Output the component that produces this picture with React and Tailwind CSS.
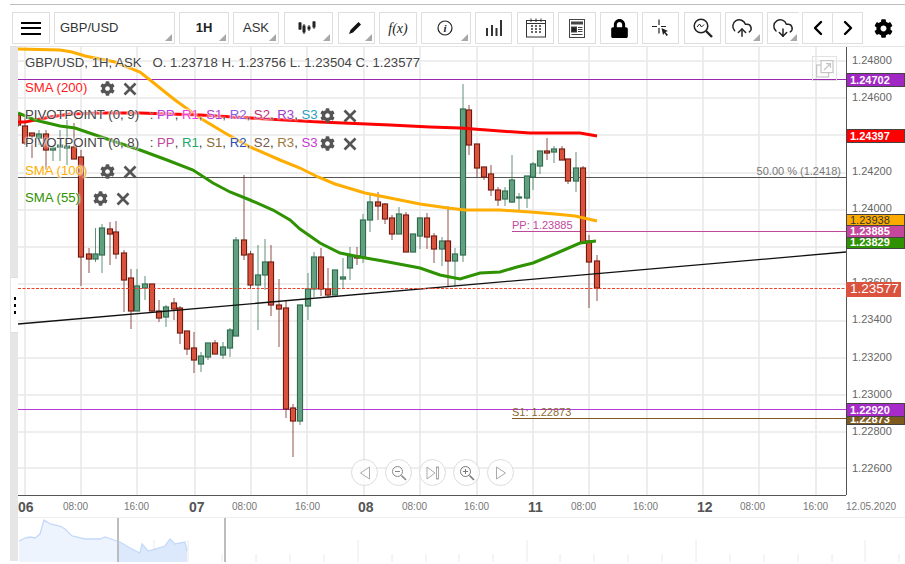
import { ChevronLeft, ChevronRight, CloudUpload, CloudDownload } from 'lucide-react';
import { FaCog, FaLock } from 'react-icons/fa';

// x, wick top, wick bottom, body top, body bottom, direction
const candles = [
  [18, 114, 127, 115, 125, 'r'], [25, 118, 145, 126, 143, 'r'], [32, 133, 158, 133, 136, 'r'], [39, 130, 145, 134, 138, 'g'],
  [46, 130, 170, 134, 150, 'r'], [53, 146, 161, 148, 150, 'g'], [60, 130, 161, 145, 147, 'g'], [67, 120, 165, 146, 148, 'g'],
  [74, 123, 159, 147, 159, 'r'], [81, 150, 286, 157, 257, 'r'], [89, 248, 273, 254, 259, 'r'], [95.5, 228, 262, 254, 259, 'g'],
  [102, 224, 273, 228, 255, 'g'], [110, 222, 265, 229, 234, 'r'], [116, 221, 259, 232, 254, 'r'], [124, 250, 312, 253, 280, 'r'],
  [131, 269, 329, 278, 311, 'r'], [137, 269, 311, 286, 311, 'g'], [145, 276, 300, 284, 288, 'g'], [152, 284, 312, 284, 311, 'r'],
  [159, 300, 322, 311, 318, 'r'], [166, 305, 327, 307, 317, 'g'], [174, 298, 320, 303, 309, 'r'], [180, 306, 344, 308, 333, 'r'],
  [187, 331, 355, 331, 349, 'r'], [194, 332, 373, 348, 360, 'r'], [201, 352, 372, 356, 364, 'g'], [208, 343, 360, 343, 357, 'g'],
  [215, 340, 354, 343, 354, 'r'], [223, 342, 359, 347, 355, 'g'], [230, 328, 357, 330, 348, 'g'], [236, 237, 336, 240, 336, 'g'],
  [244, 175, 260, 240, 255, 'r'], [250.5, 251, 289, 254, 285, 'r'], [258, 245, 330, 275, 285, 'g'], [265, 239, 290, 262, 275, 'g'],
  [271, 245, 316, 262, 305, 'r'], [279, 279, 347, 305, 309, 'r'], [286, 301, 418, 308, 409, 'r'], [293, 404, 457, 408, 421, 'r'],
  [300, 305, 425, 305, 421, 'g'], [308, 273, 320, 289, 306, 'g'], [314, 252, 297, 257, 289, 'g'], [321, 248, 296, 257, 289, 'r'],
  [328, 268, 298, 289, 295, 'r'], [335, 270, 295, 270, 295, 'g'], [343, 258, 288, 277, 279, 'g'], [350, 247, 280, 256, 268, 'g'],
  [357, 247, 265, 256, 258, 'r'], [363, 214, 263, 220, 257, 'g'], [370, 194, 232, 202, 220, 'g'], [378, 192, 220, 202, 206, 'r'],
  [385, 203, 224, 204, 219, 'r'], [392, 215, 240, 218, 234, 'r'], [399, 207, 234, 214, 234, 'g'], [406, 212, 252, 215, 252, 'r'],
  [413, 234, 252, 234, 252, 'g'], [420, 217, 249, 218, 236, 'g'], [427, 213, 249, 218, 237, 'r'], [434, 233, 263, 236, 249, 'r'],
  [442, 237, 266, 241, 249, 'g'], [448, 206, 286, 241, 261, 'r'], [455, 248, 287, 254, 261, 'g'], [463, 84, 262, 109, 255, 'g'],
  [469, 105, 155, 110, 145, 'r'], [477, 144, 177, 144, 168, 'r'], [484, 167, 180, 167, 177, 'r'], [491, 165, 196, 174, 190, 'r'],
  [498, 187, 206, 190, 200, 'r'], [505, 187, 206, 191, 199, 'g'], [512, 155, 203, 180, 202, 'g'], [519, 193, 212, 197, 198, 'g'],
  [527, 176, 208, 176, 198, 'g'], [533, 162, 190, 164, 177, 'g'], [540, 151, 174, 151, 166, 'g'], [547, 138, 160, 151, 153, 'r'],
  [554, 146, 163, 149, 152, 'g'], [562, 146, 160, 149, 160, 'r'], [568, 159, 184, 159, 181, 'r'], [576, 152, 192, 168, 181, 'g'],
  [583, 166, 243, 168, 243, 'r'], [589, 235, 308, 241, 262, 'r'], [597, 255, 301, 261, 288, 'r'],
];

const orange = '18,49 60,50 72,52 85,56 115,62 140,72 150,80 175,100 200,118 225,133 250,147 280,160 300,168 318,177 335,184 365,193 390,198 420,204 448,208 465,210 500,210 530,212 555,214 575,216 597,221';
const red = '18,122 25,122 50,117 70,114 100,113 140,113 200,115 250,118 320,122 390,125 430,127 460,128 500,131 530,133 580,133 597,136';
const green = '18,113 35,120 60,126 75,128 110,140 140,150 167,160 193,170 213,183 230,192 250,200 273,210 290,220 300,229 320,243 340,253 360,257 383,261 420,268 440,275 460,279 480,273 500,272 517,267 533,263 557,253 580,243 596,241';
const miniArea = '19,540 25,537 30,536 35,537 40,533 44,519 50,523 60,525 65,528 72,535 85,538 100,538 105,536 117,540 120,541 130,547 140,552 142,543 148,550 155,548 165,545 170,538 175,543 185,541 187,550';

const gridX = [25, 81, 137, 195, 251, 307, 364, 420, 477, 533, 589, 647, 703, 759, 816];
const gridY = [61, 98, 135, 173, 210, 247, 284, 321, 358, 395, 432, 468];
const miniShort = [53, 87, 121, 222, 256, 290, 324, 392, 426, 459, 493, 560, 594, 628, 662, 730, 764, 798, 832, 899];
const miniTall = [154, 188, 358, 527, 696, 865];

const ticks = [
  ['1.24800', 60], ['1.24600', 97], ['1.24200', 171], ['1.24000', 208], ['1.23800', 245], ['1.23600', 282],
  ['1.23400', 319], ['1.23200', 357], ['1.23000', 394], ['1.22800', 431], ['1.22600', 468],
];

const tags = [
  { text: '1.24702', top: 73, h: 14, cls: 'bg-[#a027c4] text-white font-bold border border-[#444]' },
  { text: '1.24397', top: 129, h: 14, cls: 'bg-[#ff0000] text-white font-bold border border-[#444]' },
  { text: '1.23938', top: 214, h: 12, cls: 'bg-[#fbab00] text-[#333] border border-[#444]' },
  { text: '1.23829', top: 236, h: 13, cls: 'bg-[#2f9200] text-white font-bold border border-[#444]' },
  { text: '1.23885', top: 225, h: 13, cls: 'bg-[#c4479d] text-white font-bold border border-[#444]' },
  { text: '1.22873', top: 413, h: 12, cls: 'bg-[#7d5a1e] text-white font-bold border border-[#444]' },
  { text: '1.22920', top: 403, h: 14, cls: 'bg-[#a62bc9] text-white font-bold border border-[#444]' },
];

const times = [
  ['06', 18, true], ['08:00', 63], ['16:00', 124], ['07', 189, true], ['08:00', 232], ['16:00', 295], ['08', 358, true], ['08:00', 402],
  ['16:00', 464], ['11', 528, true], ['08:00', 571], ['16:00', 633], ['12', 697, true], ['08:00', 740], ['16:00', 803], ['12.05.2020', 846],
];

function Corner() {
  return (
    <svg className="absolute right-[2px] bottom-[2px]" width="7" height="7" viewBox="0 0 7 7">
      <polygon points="7,0 7,7 0,7" fill="#a8a8a8" />
    </svg>
  );
}

function Btn({ className, arrow, children }) {
  return (
    <div className={`relative flex items-center justify-center h-[32px] shrink-0 border border-[#dedede] ${className}`}>
      {children}
      {arrow && <Corner />}
    </div>
  );
}

function Times({ size = 14 }) {
  return (
    <svg width={size} height={size} viewBox="0 0 14 14" stroke="#555" strokeWidth="2.6">
      <line x1="1.5" y1="1.5" x2="12.5" y2="12.5" />
      <line x1="12.5" y1="1.5" x2="1.5" y2="12.5" />
    </svg>
  );
}

function Tools() {
  return (
    <span className="flex items-center gap-[8px]">
      <FaCog className="text-[#555] text-[15px]" />
      <Times />
    </span>
  );
}

function CircleBtn({ children }) {
  return (
    <div className="flex items-center justify-center w-[27px] h-[27px] rounded-full border border-[#dcdcdc] bg-white/70">
      {children}
    </div>
  );
}

function Toolbar() {
  return (
    <div className="flex mt-[7px] ml-[2px] h-[32px] text-[13px] text-[#333]">
      <Btn className="w-[38px]">
        <div className="flex flex-col gap-[3.5px] w-[20px]">
          <span className="h-[2px] bg-black" />
          <span className="h-[2px] bg-black" />
          <span className="h-[2px] bg-black" />
        </div>
      </Btn>
      <Btn className="w-[121px] ml-[4px] justify-start pl-[5px]" arrow>GBP/USD</Btn>
      <Btn className="w-[50px] ml-[4px] font-bold text-[#222]" arrow>1H</Btn>
      <Btn className="w-[46px] ml-[4px]" arrow>ASK</Btn>
      <Btn className="w-[49px] ml-[5px]" arrow>
        <svg className="mr-[4px]" width="18" height="14" viewBox="0 0 18 14" fill="#222" stroke="#222">
          <line x1="2" y1="1" x2="2" y2="9" /><rect x="1" y="2" width="2" height="6" />
          <line x1="6" y1="3" x2="6" y2="13" /><rect x="5" y="5" width="2" height="6" />
          <line x1="11" y1="4" x2="11" y2="10" /><rect x="10" y="6" width="2" height="2" />
          <line x1="16" y1="0" x2="16" y2="8" /><rect x="15" y="1" width="2" height="5" />
        </svg>
      </Btn>
      <Btn className="w-[37px] ml-[5px]" arrow>
        <svg className="mr-[4px]" width="14" height="14" viewBox="0 0 14 14">
          <path d="M10.5 1 L13 3.5 L5 11.5 L1 13 L2.5 9 Z" fill="#111" />
        </svg>
      </Btn>
      <Btn className="w-[38px] ml-[4px] font-['Liberation_Serif',serif] italic text-[14px] text-[#222]">f(x)</Btn>
      <Btn className="w-[50px] ml-[4px]" arrow>
        <svg className="mr-[3px]" width="16" height="16" viewBox="0 0 16 16">
          <circle cx="8" cy="8" r="7" fill="none" stroke="#222" strokeWidth="1.2" />
          <text x="8" y="12" textAnchor="middle" fontFamily="'Liberation Serif', serif" fontStyle="italic" fontWeight="700" fontSize="11" fill="#222">i</text>
        </svg>
      </Btn>
      <Btn className="w-[37px] ml-[4px]">
        <svg width="18" height="18" viewBox="0 0 18 18" fill="#333">
          <rect x="1" y="9" width="2" height="8" /><rect x="6" y="6" width="2" height="11" />
          <rect x="10.5" y="9" width="2" height="8" /><rect x="15" y="1" width="2" height="16" />
        </svg>
      </Btn>
      <Btn className="w-[37px] ml-[5px]">
        <svg width="20" height="20" viewBox="0 0 20 20" fill="none" stroke="#333">
          <rect x="0.5" y="2.5" width="19" height="16.5" />
          <line x1="0.5" y1="5.5" x2="19.5" y2="5.5" />
          <path d="M5 0.5V4M10 0.5V4M15 0.5V4" />
          <path d="M5 8h2M9 8h2M13 8h2M5 11h2M9 11h2M13 11h2M5 14h2M9 14h2M13 14h2" strokeWidth="1.6" />
        </svg>
      </Btn>
      <Btn className="w-[38px] ml-[4px]">
        <svg width="16" height="19" viewBox="0 0 16 19" fill="none" stroke="#444">
          <rect x="0.5" y="0.5" width="15" height="18" />
          <rect x="2.5" y="3" width="11" height="2" fill="#444" />
          <rect x="2.5" y="8" width="5" height="5" fill="#222" />
          <path d="M9 8.5h4.5M9 10.5h4.5M9 12.5h4.5M2.5 15.5h11" />
        </svg>
      </Btn>
      <Btn className="w-[38px] ml-[4px]"><FaLock className="text-black text-[19px]" /></Btn>
      <Btn className="w-[37px] ml-[4px]">
        <svg width="18" height="18" viewBox="0 0 18 18">
          <path d="M7 0.5V6M7 9V14.5M0 7.5H5M9 7.5H14" stroke="#222" strokeWidth="1.2" fill="none" />
          <path d="M9.5 9 L16 12 L13.5 13 L16 16 L14.5 17 L12.5 14 L11 16 Z" fill="#222" />
        </svg>
      </Btn>
      <Btn className="w-[37px] ml-[5px]">
        <svg width="20" height="20" viewBox="0 0 20 20" fill="none" stroke="#222">
          <circle cx="8" cy="8" r="6.8" strokeWidth="1.5" />
          <path d="M4 9 L6.5 6 L8.5 9 L11 6.5" strokeWidth="1" />
          <line x1="13" y1="13" x2="19" y2="19" strokeWidth="2.4" />
        </svg>
      </Btn>
      <Btn className="w-[38px] ml-[4px]" arrow>
        <CloudUpload className="mr-[5px] text-[#222]" size={22} strokeWidth={1.6} />
      </Btn>
      <Btn className="w-[32px] ml-[4px] border-r-0" arrow>
        <CloudDownload className="mr-[2px] text-[#222]" size={22} strokeWidth={1.6} />
      </Btn>
      <div className="flex h-[32px] ml-[3px] w-[61px] border border-[#dedede]">
        <div className="flex flex-1 items-center justify-center border-r border-[#dedede]">
          <ChevronLeft className="text-black" size={24} strokeWidth={2.4} />
        </div>
        <div className="flex flex-1 items-center justify-center">
          <ChevronRight className="text-black" size={24} strokeWidth={2.4} />
        </div>
      </div>
      <div className="flex items-center justify-center w-[40px]">
        <FaCog className="text-black text-[19px]" />
      </div>
    </div>
  );
}

function Plot() {
  return (
    <svg className="absolute inset-0" width="828" height="448" viewBox="18 47 828 448">
      {gridX.map((x) => <line key={x} x1={x} y1="47" x2={x} y2="495" stroke="#e9e9e9" strokeWidth="1.6" />)}
      {gridY.map((y) => <line key={y} x1="18" y1={y} x2="846" y2={y} stroke="#e9e9e9" strokeWidth="1.6" />)}
      <line x1="18" y1="79.5" x2="846" y2="79.5" stroke="#9c27b0" strokeWidth="1.2" />
      <line x1="18" y1="177.5" x2="846" y2="177.5" stroke="#555" />
      <line x1="512" y1="231.5" x2="846" y2="231.5" stroke="#c0489b" strokeWidth="1.2" />
      <line x1="18" y1="409.5" x2="846" y2="409.5" stroke="#b53ad8" strokeWidth="1.2" />
      <line x1="512" y1="418.5" x2="846" y2="418.5" stroke="#7d5a1e" strokeWidth="1.2" />
      {candles.map(([x, wt, wb, bt, bb, dir]) => {
        const up = dir === 'g';
        return (
          <g key={x}>
            <line x1={x} y1={wt} x2={x} y2={wb} stroke={up ? '#2f6b4c' : '#6b1a12'} strokeOpacity="0.75" />
            <rect x={x - 3.5} y={bt - 1} width="7" height={bb - bt + 2} fill={up ? '#2f6b4c' : '#7a1a10'} fillOpacity="0.2" />
            <rect x={x - 2.5} y={bt} width="5" height={Math.max(bb - bt, 1)} fill={up ? '#629f80' : '#d8523c'} stroke={up ? '#2f6b4c' : '#6e1a10'} />
          </g>
        );
      })}
      <polyline points={orange} fill="none" stroke="#ffad00" strokeWidth="3" />
      <polyline points={red} fill="none" stroke="#ff0000" strokeWidth="3" />
      <polyline points={green} fill="none" stroke="#2f9200" strokeWidth="3" />
      <line x1="18" y1="324" x2="846" y2="252" stroke="#111" strokeWidth="1.3" />
      <line x1="18" y1="288.5" x2="846" y2="288.5" stroke="#e8452f" strokeDasharray="3 1.5" />
      <text x="841" y="175" textAnchor="end" fontSize="11" fill="#777">50.00 % (1.2418)</text>
      <text x="512" y="229" fontSize="11" fill="#c0489b">PP: 1.23885</text>
      <text x="512" y="416" fontSize="11" fill="#8a6a2e">S1: 1.22873</text>
    </svg>
  );
}

function Legend() {
  return (
    <div className="absolute left-[7px] top-[7px] flex flex-col text-[13.2px] text-[#444] whitespace-pre leading-[18px] [text-shadow:0_0_2px_#fff,0_0_2px_#fff,0_0_3px_#fff]">
      <div className="h-[25px]">GBP/USD, 1H, ASK   O. 1.23718 H. 1.23756 L. 1.23504 C. 1.23577</div>
      <div className="flex items-start h-[27px] text-[#ff2020]">SMA (200)<span className="ml-[13px] mt-[2px]"><Tools /></span></div>
      <div className="flex items-start h-[28px]">
        PIVOTPOINT (0, 9)
        <span className="ml-[7px]"> : </span>
        <span className="text-[#b93be6]">PP</span>, <span className="text-[#f03be0]">R1</span>, <span className="text-[#b03ad6]">S1</span>, <span className="text-[#8a5ce8]">R2</span>, <span className="text-[#c0307a]">S2</span>, <span className="text-[#a040d0]">R3</span>, <span className="text-[#2a9fc0]">S3</span>
        <span className="ml-[2px] mt-[2px]"><Tools /></span>
      </div>
      <div className="flex items-start h-[28px]">
        PIVOTPOINT (0, 8)
        <span className="ml-[7px]"> : </span>
        <span className="text-[#c0489b]">PP</span>, <span className="text-[#1fa76f]">R1</span>, <span className="text-[#8a6a2e]">S1</span>, <span className="text-[#2b4fb0]">R2</span>, <span className="text-[#7a5a4a]">S2</span>, <span className="text-[#a07a3c]">R3</span>, <span className="text-[#c83ad0]">S3</span>
        <span className="ml-[2px] mt-[2px]"><Tools /></span>
      </div>
      <div className="flex items-start h-[27px] text-[#ffad00]">SMA (100)<span className="ml-[13px] mt-[2px]"><Tools /></span></div>
      <div className="flex items-start h-[27px] text-[#2f9200]">SMA (55)<span className="ml-[13px] mt-[2px]"><Tools /></span></div>
    </div>
  );
}

function ZoomControls() {
  return (
    <div className="absolute left-[333px] top-[412px] flex gap-[7px]">
      <CircleBtn>
        <svg width="12" height="14" viewBox="0 0 12 14" fill="none" stroke="#aaa"><path d="M10.5 1 L1.5 7 L10.5 13 Z" /></svg>
      </CircleBtn>
      <CircleBtn>
        <svg width="16" height="16" viewBox="0 0 16 16" fill="none" stroke="#888"><circle cx="6.5" cy="6.5" r="5" /><path d="M4 6.5h5" /><path d="M10.5 10.5 L15 15" strokeWidth="1.6" /></svg>
      </CircleBtn>
      <CircleBtn>
        <svg width="14" height="14" viewBox="0 0 14 14" fill="none" stroke="#aaa"><path d="M1 1 L9 7 L1 13 Z" /><rect x="10.5" y="1" width="2" height="12" /></svg>
      </CircleBtn>
      <CircleBtn>
        <svg width="16" height="16" viewBox="0 0 16 16" fill="none" stroke="#777"><circle cx="6.5" cy="6.5" r="5" /><path d="M4 6.5h5M6.5 4v5" /><path d="M10.5 10.5 L15 15" strokeWidth="1.6" /></svg>
      </CircleBtn>
      <CircleBtn>
        <svg width="12" height="14" viewBox="0 0 12 14" fill="none" stroke="#aaa"><path d="M1.5 1 L10.5 7 L1.5 13 Z" /></svg>
      </CircleBtn>
    </div>
  );
}

function PriceAxis() {
  return (
    <div className="relative w-[59px] border-l border-[#555] text-[11px] text-[#666]">
      {ticks.map(([t, y]) => (
        <span key={t} className="absolute left-[5px] leading-[14px]" style={{ top: y - 54 }}>{t}</span>
      ))}
      {tags.map((t) => (
        <div
          key={t.text}
          className={`absolute left-[-1px] right-0 flex items-center pl-[3px] overflow-hidden leading-none ${t.cls}`}
          style={{ top: t.top - 47, height: t.h }}
        >
          {t.text}
        </div>
      ))}
      <div className="absolute left-[-1px] top-[235px] w-[55px] h-[15px] flex items-center pl-[4px] bg-[#d9533f] text-white text-[13.5px]">1.23577</div>
    </div>
  );
}

function Navigator() {
  return (
    <svg className="block" width="887" height="44" viewBox="18 517 887 44">
      {miniShort.map((x) => <line key={x} x1={x} y1="553" x2={x} y2="561" stroke="#eaeaea" />)}
      {miniTall.map((x) => <line key={x} x1={x} y1="539" x2={x} y2="561" stroke="#eaeaea" />)}
      <polygon points={`${miniArea} 187,561 19,561`} fill="#dce9fc" />
      <rect x="19" y="517" width="99" height="44" fill="#fff" fillOpacity="0.5" />
      <polyline points={miniArea} fill="none" stroke="#c4d9fa" strokeWidth="1.3" />
      <rect x="117" y="517" width="2" height="44" fill="#bdbdbd" />
      <rect x="224" y="517" width="2" height="44" fill="#bdbdbd" />
    </svg>
  );
}

export default function App() {
  return (
    <div className="w-[905px] h-[564px] overflow-hidden bg-white pt-[4px] pl-[10px] font-['Liberation_Sans',Arial,sans-serif]">
      <div className="h-[1px] bg-[#bdbdbd]" />
      <Toolbar />
      <div className="flex mt-[2px] h-[515px]">
        <div className="relative w-[8px] bg-[#e6e6e6] border-t border-[#dedede]">
          <div className="absolute left-[1px] top-[230px] w-[7px] h-[56px] bg-white border-y border-[#dedede] flex flex-col items-center justify-center gap-[4px]">
            <span className="w-[2px] h-[3px] bg-black" />
            <span className="w-[2px] h-[3px] bg-black" />
            <span className="w-[2px] h-[3px] bg-black" />
          </div>
        </div>
        <div className="flex flex-col flex-1 border-t border-[#e6e6e6]">
          <div className="flex h-[448px]">
            <div className="relative w-[828px] overflow-hidden">
              <Plot />
              <Legend />
              <ZoomControls />
              <div className="absolute left-[794px] top-[9px] w-[25px] h-[25px] border border-[#e2e2e2] flex items-center justify-center">
                <svg width="18" height="18" viewBox="0 0 18 18" fill="none" stroke="#c4c4c4" strokeWidth="1.2">
                  <rect x="0.6" y="5" width="12" height="12" />
                  <rect x="5" y="0.6" width="12" height="12" fill="#fff" />
                  <path d="M8 10 L14 4 M10 3.6h4.4V8" />
                </svg>
              </div>
            </div>
            <PriceAxis />
          </div>
          <div className="relative h-[22px] border-t border-[#555] w-[828px] text-[10px] text-[#777]">
            {times.map(([t, x, bold]) => (
              <span
                key={`${t}${x}`}
                className={bold ? 'absolute top-[2px] text-[14px] font-bold text-[#555] leading-[18px]' : 'absolute top-[5px] leading-[12px]'}
                style={{ left: x - 18 }}
              >
                {t}
              </span>
            ))}
          </div>
          <div className="h-[44px] border-t border-[#eeeeee]">
            <Navigator />
          </div>
        </div>
      </div>
    </div>
  );
}
